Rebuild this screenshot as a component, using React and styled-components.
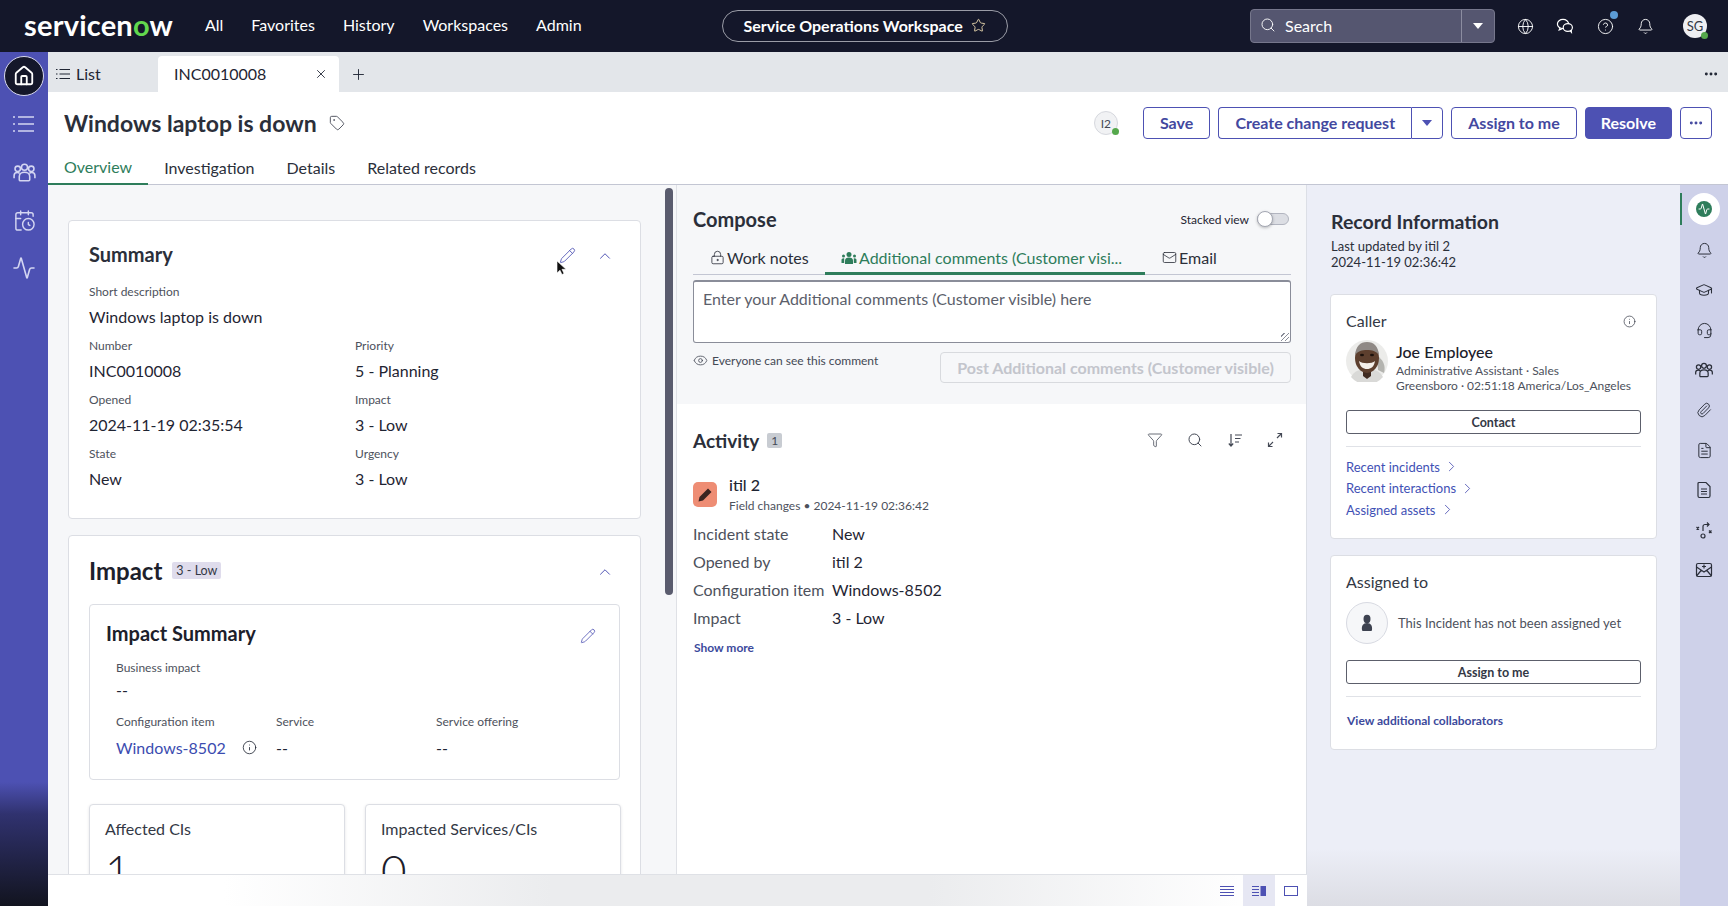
import React from "react";
import styled, { createGlobalStyle } from "styled-components";
import {
  Activity,
  Bell,
  CalendarClock,
  ChevronRight,
  ChevronUp,
  CircleHelp,
  Eye,
  FileText,
  Funnel,
  Globe,
  GraduationCap,
  Headset,
  House,
  Info,
  LockKeyhole,
  Mail,
  Ellipsis,
  Paperclip,
  Pencil,
  Plus,
  Search,
  Star,
  Tag,
  X,
} from "lucide-react";

const GlobalStyle = createGlobalStyle`
  html, body { margin: 0; padding: 0; height: 100%; overflow: hidden; }
  body { font-family: Lato, "Liberation Sans", sans-serif; color: #1f2533; background: #fff; }
  * { box-sizing: border-box; }
`;

const Page = styled.div`
  width: 1728px;
  height: 906px;
  display: flex;
  flex-direction: column;
  overflow: hidden;
`;

/* top bar */
const TopBar = styled.header`
  height: 52px;
  flex: none;
  background: #14172a;
  color: #fff;
  display: flex;
  align-items: center;
  padding: 0 21px 0 24px;
`;
const Logo = styled.div`
  font-size: 29px;
  font-weight: 700;
  letter-spacing: 0.2px;
  line-height: 1;
  width: 181px;
  margin-top: -3px;
  span {
    color: #62d84e;
  }
`;
const TopNav = styled.nav`
  display: flex;
  gap: 28px;
  font-size: 16px;
  margin-top: -3px;
`;
const Pill = styled.div`
  margin-left: 140px;
  width: 286px;
  height: 32px;
  padding-bottom: 2px;
  border: 1px solid #9a9ca6;
  border-radius: 16px;
  display: flex;
  align-items: center;
  justify-content: center;
  gap: 8px;
  font-size: 16px;
  font-weight: 700;
  svg {
    color: #f1dfb4;
  }
`;
const SearchBox = styled.div`
  margin-left: auto;
  width: 245px;
  height: 34px;
  background: #555670;
  border: 1px solid #76778c;
  border-radius: 4px;
  display: flex;
  align-items: center;
  font-size: 16px;
`;
const SearchField = styled.div`
  flex: 1;
  height: 100%;
  padding: 0 0 2px 9px;
  display: flex;
  align-items: center;
  gap: 9px;
  border-right: 1px solid #8b8ca0;
`;
const SearchDrop = styled.div`
  width: 32px;
  display: flex;
  justify-content: center;
`;
const Caret = styled.i`
  display: block;
  width: 0;
  height: 0;
  border-left: 5.5px solid transparent;
  border-right: 5.5px solid transparent;
  border-top: 6px solid ${(p) => p.$color || "#fff"};
`;
const TopIcons = styled.div`
  display: flex;
  align-items: center;
  gap: 20px;
  margin-left: 20px;
`;
const TopIcon = styled.div`
  width: 20px;
  height: 20px;
  position: relative;
  display: flex;
  align-items: center;
  justify-content: center;
`;
const HelpDot = styled.i`
  position: absolute;
  top: -5px;
  right: -3px;
  width: 8px;
  height: 8px;
  border-radius: 50%;
  background: #5b9bd5;
`;
const UserChip = styled.div`
  width: 24px;
  height: 24px;
  margin-left: 8px;
  border-radius: 50%;
  background: #eeeff2;
  color: #333845;
  font-size: 13px;
  display: flex;
  align-items: center;
  justify-content: center;
  position: relative;
`;
const OnlineDot = styled.i`
  position: absolute;
  right: ${(p) => p.$right ?? -1}px;
  bottom: ${(p) => p.$bottom ?? -1}px;
  width: 7px;
  height: 7px;
  border-radius: 50%;
  background: #55a84c;
`;

/* shell */
const Shell = styled.div`
  flex: 1;
  display: flex;
  min-height: 0;
`;
const Rail = styled.aside`
  width: 48px;
  flex: none;
  background: linear-gradient(to bottom, #4d51b3 0, #4d51b3 730px, #30326f 762px, #12141f 854px);
  color: #d4d6f2;
  display: flex;
  flex-direction: column;
  align-items: center;
  padding-top: 4px;
`;
const HomeButton = styled.div`
  width: 40px;
  height: 40px;
  border-radius: 50%;
  background: #14172a;
  border: 1px solid #d8d9ee;
  color: #fff;
  display: flex;
  align-items: center;
  justify-content: center;
  margin-bottom: 4px;
`;
const RailItem = styled.div`
  height: 48px;
  width: 100%;
  display: flex;
  align-items: center;
  justify-content: center;
`;
const Content = styled.div`
  flex: 1;
  min-width: 0;
  display: flex;
  flex-direction: column;
`;

/* tabs */
const TabBar = styled.div`
  height: 40px;
  flex: none;
  background: #e3e6ea;
  display: flex;
  align-items: flex-end;
  font-size: 16px;
`;
const ListTab = styled.div`
  width: 110px;
  height: 36px;
  padding: 0 0 1px 8px;
  display: flex;
  align-items: center;
  gap: 6px;
`;
const RecordTab = styled.div`
  width: 181px;
  height: 36px;
  background: #fff;
  border-radius: 4px 4px 0 0;
  padding: 0 11px 1px 16px;
  display: flex;
  align-items: center;
  justify-content: space-between;
`;
const AddTab = styled.div`
  height: 36px;
  margin-left: 11px;
  display: flex;
  align-items: center;
`;
const TabBarMore = styled.div`
  height: 36px;
  margin-left: auto;
  padding-right: 9px;
  display: flex;
  align-items: center;
`;

/* title */
const TitleRow = styled.div`
  height: 56px;
  flex: none;
  display: flex;
  align-items: center;
  padding: 7px 16px 1px;
  background: #fff;
`;
const Title = styled.h1`
  margin: 0;
  font-size: 23px;
  font-weight: 700;
  color: #2b2f3a;
`;
const TagWrap = styled.div`
  margin-left: 12px;
  display: flex;
  color: #4a4e5a;
`;
const Actions = styled.div`
  margin-left: auto;
  display: flex;
  align-items: center;
  gap: 8px;
`;
const Presence = styled.div`
  width: 24px;
  height: 24px;
  border-radius: 50%;
  background: #f1f2f4;
  border: 1px solid #d6d8de;
  font-size: 12px;
  color: #444955;
  display: flex;
  align-items: center;
  justify-content: center;
  position: relative;
  margin-right: 17px;
`;
const Button = styled.button`
  height: 32px;
  padding: 0 ${(p) => (p.$primary ? 15 : 16)}px 2px;
  font-family: inherit;
  font-size: 16px;
  font-weight: 700;
  color: ${(p) => (p.$primary ? "#fff" : "#43489f")};
  background: ${(p) => (p.$primary ? "#4d51b3" : "#fff")};
  border: 1px solid #4d51b3;
  border-radius: 4px;
  display: flex;
  align-items: center;
  justify-content: center;
`;
const SquareButton = styled(Button)`
  width: 32px;
  padding: 0;
`;
const SplitButton = styled.div`
  display: flex;
  ${Button}:first-child {
    width: 193px;
    padding: 0 0 2px;
    border-radius: 4px 0 0 4px;
    border-right: 0;
  }
  ${Button}:last-child {
    width: 32px;
    padding: 0;
    border-radius: 0 4px 4px 0;
  }
`;
const SubTabs = styled.div`
  height: 37px;
  flex: none;
  display: flex;
  border-bottom: 1px solid #c3c6d3;
  background: #fff;
`;
const SubTab = styled.div`
  height: 37px;
  padding: 2px 16px 0;
  display: flex;
  align-items: center;
  font-size: 16px;
  color: ${(p) => (p.$active ? "#2e7d5b" : "#2b2f3a")};
  border-bottom: ${(p) => (p.$active ? "2px solid #2e7d5b" : "0")};
`;

/* columns */
const Columns = styled.div`
  flex: 1;
  min-height: 0;
  display: flex;
`;
const Workspace = styled.div`
  width: 1259px;
  flex: none;
  display: flex;
  flex-direction: column;
`;
const Panes = styled.div`
  flex: 1;
  min-height: 0;
  display: flex;
`;
const LeftColumn = styled.section`
  width: 629px;
  flex: none;
  position: relative;
  overflow: hidden;
  background: #f6f7f9;
  border-right: 1px solid #dfe1e6;
  padding: 35px 35px 0 20px;
  display: flex;
  flex-direction: column;
  gap: 16px;
`;
const ScrollThumb = styled.i`
  position: absolute;
  top: 3px;
  left: 617px;
  width: 8px;
  height: 407px;
  border-radius: 4px;
  background: #5a5c6e;
`;
const Card = styled.div`
  background: #fff;
  border: 1px solid #dcdee4;
  border-radius: 4px;
  flex: none;
`;
const SummaryCard = styled(Card)`
  height: 299px;
  padding: 19px 20px 0;
`;
const ImpactCard = styled(Card)`
  padding: 18px 20px;
`;
const CardHead = styled.div`
  display: flex;
  align-items: center;
  justify-content: space-between;
  height: 28px;
`;
const CardTitle = styled.h2`
  margin: 0;
  font-size: ${(p) => p.$size || 20}px;
  font-weight: 700;
  color: #2b2f3a;
`;
const HeadIcons = styled.div`
  position: relative;
  display: flex;
  align-items: center;
  gap: 20px;
  margin: 3px 6px 0 0;
  color: #4d51b3;
`;
const Cursor = styled.svg`
  position: absolute;
  left: -3px;
  top: 13px;
`;
const FieldGrid = styled.div`
  display: grid;
  grid-template-columns: ${(p) => p.$cols || "266px 1fr"};
  row-gap: 4px;
  margin-top: ${(p) => p.$top ?? 0}px;
`;
const Field = styled.div`
  grid-column: ${(p) => (p.$wide ? "1 / -1" : "auto")};
  min-height: 50px;
`;
const Label = styled.div`
  font-size: 12px;
  line-height: 18px;
  color: #4d515c;
`;
const Value = styled.div`
  margin-top: ${(p) => p.$gap ?? 1}px;
  font-size: 16px;
  line-height: 29px;
  color: #1f2533;
  display: flex;
  align-items: center;
  gap: 16px;
`;
const ImpactHead = styled.div`
  display: flex;
  align-items: center;
  justify-content: space-between;
  height: 32px;
`;
const ImpactTitle = styled.div`
  display: flex;
  align-items: center;
  gap: 10px;
`;
const BigTitle = styled.h2`
  margin: 0;
  font-size: 24px;
  font-weight: 700;
  color: #1c202b;
`;
const Badge = styled.span`
  background: #dfdcec;
  font-size: 12.5px;
  line-height: 17px;
  padding: 0 4px;
  border-radius: 2px;
  color: #333845;
`;
const InnerCard = styled(Card)`
  margin-top: 18px;
  height: 176px;
  padding: 14px 16px 0;
`;
const InnerHead = styled.div`
  display: flex;
  align-items: center;
  justify-content: space-between;
  padding-right: 7px;
  height: 28px;
  svg {
    margin-top: 6px;
  }
`;
const InnerTitle = styled.h3`
  margin: 0;
  font-size: 20px;
  font-weight: 700;
  color: #1c202b;
`;
const InnerFields = styled.div`
  padding: 12px 0 0 10px;
`;
const LinkValue = styled.span`
  color: #3b4cb0;
`;
const StatGrid = styled.div`
  margin-top: 24px;
  display: grid;
  grid-template-columns: 256px 256px;
  gap: 20px;
`;
const StatCard = styled(Card)`
  height: 90px;
  padding: 14px 15px;
  box-shadow: 0 1px 3px rgba(30, 35, 60, 0.12);
`;
const StatTitle = styled.div`
  font-size: 16px;
  color: #333845;
`;
const StatValue = styled.div`
  font-size: 44px;
  font-weight: 300;
  line-height: 1;
  margin-top: 10px;
  color: #1c202b;
`;

/* middle */
const MiddleColumn = styled.section`
  width: 630px;
  flex: none;
  display: flex;
  flex-direction: column;
  border-right: 1px solid #dcdfe6;
  background: #fff;
`;
const Compose = styled.div`
  height: 219px;
  flex: none;
  background: #f6f7f9;
  padding: 20px 15px 0 16px;
`;
const ComposeHead = styled.div`
  display: flex;
  align-items: center;
  justify-content: space-between;
  height: 28px;
`;
const StackedView = styled.div`
  display: flex;
  align-items: center;
  gap: 8px;
  font-size: 12px;
  margin-right: 2px;
`;
const Toggle = styled.i`
  display: block;
  width: 32px;
  height: 12px;
  border-radius: 6px;
  background: #dcdee4;
  border: 1px solid #b2b5c0;
  position: relative;
`;
const Knob = styled.b`
  position: absolute;
  left: -1px;
  top: -3px;
  width: 16px;
  height: 16px;
  border-radius: 50%;
  background: #fff;
  border: 1px solid #a4a7b3;
  box-shadow: 0 1px 3px rgba(0, 0, 0, 0.25);
`;
const ComposeTabs = styled.div`
  margin-top: 8px;
  height: 34px;
  display: flex;
  border-bottom: 1px solid #c3c6d3;
`;
const ComposeTab = styled.div`
  height: 34px;
  padding-top: 2px;
  padding-bottom: ${(p) => (p.$active ? 0 : 3)}px;
  width: ${(p) => p.$w}px;
  padding-left: ${(p) => p.$pad}px;
  display: flex;
  align-items: center;
  gap: 2px;
  font-size: 16px;
  white-space: nowrap;
  color: ${(p) => (p.$active ? "#2e7d5b" : "#2b2f3a")};
  border-bottom: ${(p) => (p.$active ? "3px solid #2e7d5b" : "0")};
`;
const TextArea = styled.div`
  position: relative;
  margin-top: 5px;
  height: 63px;
  background: #fff;
  border: 1px solid #8a8d99;
  border-top-width: 2px;
  border-radius: 3px;
  padding: 6px 9px;
  font-size: 16px;
  line-height: 22px;
  color: #5c5f6b;
`;
const Grip = styled.i`
  position: absolute;
  right: 1px;
  bottom: 1px;
  width: 8px;
  height: 8px;
  background: repeating-linear-gradient(135deg, transparent 0 2px, #8a8d99 2px 3px);
`;
const ComposeFoot = styled.div`
  display: flex;
  justify-content: space-between;
  margin-top: 9px;
`;
const Hint = styled.div`
  display: flex;
  align-items: center;
  gap: 4px;
  height: 16px;
  font-size: 12px;
  color: #444955;
`;
const PostButton = styled.div`
  width: 351px;
  height: 31px;
  border: 1px solid #d8dade;
  border-radius: 4px;
  display: flex;
  align-items: center;
  justify-content: center;
  font-size: 16px;
  font-weight: 700;
  color: #c3c5cc;
`;
const ActivitySection = styled.div`
  padding: 22px 23px 0 16px;
`;
const ActivityHead = styled.div`
  display: flex;
  align-items: center;
  height: 28px;
`;
const CountBadge = styled.span`
  margin-left: 8px;
  width: 15px;
  height: 15px;
  background: #c8ccd2;
  border-radius: 2px;
  font-size: 12px;
  display: flex;
  align-items: center;
  justify-content: center;
  color: #444955;
`;
const ActivityTools = styled.div`
  margin-left: auto;
  display: flex;
  gap: 24px;
  color: #444955;
`;
const Entry = styled.div`
  display: flex;
  gap: 12px;
  align-items: flex-start;
  margin-top: 20px;
`;
const EntryIcon = styled.div`
  width: 24px;
  height: 25px;
  margin-top: 8px;
  background: #ee8d74;
  border-radius: 5px;
  display: flex;
  align-items: center;
  justify-content: center;
  color: #3b2420;
`;
const EntryName = styled.div`
  font-size: 16px;
  line-height: 22px;
  font-weight: 500;
`;
const EntryMeta = styled.div`
  font-size: 12px;
  line-height: 20px;
  color: #4d515c;
`;
const ChangeRows = styled.div`
  margin-top: 3px;
  display: grid;
  grid-template-columns: 139px 1fr;
  grid-auto-rows: 28px;
  align-items: center;
  font-size: 16px;
`;
const ChangeLabel = styled.div`
  color: #4d515c;
`;
const ShowMore = styled.div`
  margin: 9px 0 0 1px;
  font-size: 12px;
  font-weight: 700;
  color: #3c4a9c;
`;

/* bottom */
const BottomBar = styled.div`
  height: 32px;
  flex: none;
  display: flex;
  justify-content: flex-end;
  align-items: center;
  border-top: 1px solid #dfe1e6;
  background: linear-gradient(to right, #fff 14%, #ebecee 40%, #ebecee 70%, #fff 96%);
`;
const ViewButton = styled.div`
  width: 32px;
  height: 100%;
  display: flex;
  align-items: center;
  justify-content: center;
  color: #4d51b3;
  background: ${(p) => (p.$active ? "#e6e7f3" : "transparent")};
`;

/* right */
const RightColumn = styled.section`
  flex: 1;
  min-width: 0;
  background: linear-gradient(to bottom, #eceef7 92%, #dcdde4 100%);
  padding: 23px 23px 0;
  display: flex;
  flex-direction: column;
`;
const RecordTitle = styled.h2`
  margin: 0 0 0 1px;
  font-size: 19.5px;
  line-height: 28px;
  font-weight: 700;
  color: #2b2f3a;
`;
const RecordMeta = styled.div`
  margin: 2px 0 0 1px;
  font-size: 13px;
  line-height: 16px;
  color: #2b2f3a;
`;
const SideCard = styled(Card)`
  padding: 14px 15px 0;
  height: ${(p) => p.$h}px;
  margin-top: ${(p) => p.$top}px;
`;
const SideHead = styled.div`
  display: flex;
  align-items: center;
  justify-content: space-between;
  font-size: 16px;
  line-height: 24px;
  color: #333845;
  padding-right: 5px;
`;
const Person = styled.div`
  display: flex;
  gap: 8px;
  margin-top: 7px;
  svg {
    flex: none;
  }
`;
const PersonName = styled.div`
  font-size: 16px;
  line-height: 23px;
  font-weight: 500;
  color: #1c202b;
`;
const PersonLine = styled.div`
  font-size: 12px;
  line-height: 15px;
  color: #4d515c;
  white-space: nowrap;
`;
const OutlineButton = styled.div`
  height: ${(p) => p.$h}px;
  margin-top: ${(p) => p.$top}px;
  border: 1px solid #5c5f6b;
  border-radius: 3px;
  display: flex;
  align-items: center;
  justify-content: center;
  font-size: 12.5px;
  font-weight: 700;
  color: #333845;
`;
const Divider = styled.div`
  height: 1px;
  background: #e0e2e7;
  margin-top: 12px;
`;
const LinkList = styled.div`
  margin-top: 9px;
`;
const SideLink = styled.div`
  height: 21.5px;
  display: flex;
  align-items: center;
  gap: 3px;
  font-size: 13px;
  color: #3f51b5;
  svg {
    color: #4d51b3;
  }
`;
const Unassigned = styled.div`
  display: flex;
  align-items: center;
  gap: 10px;
  margin-top: 8px;
  font-size: 13px;
  color: #4d515c;
`;
const EmptyAvatar = styled.div`
  width: 42px;
  height: 42px;
  border-radius: 50%;
  background: #f6f7f9;
  border: 1px solid #d8dae2;
  color: #3d4250;
  display: flex;
  align-items: center;
  justify-content: center;
`;
const BoldLink = styled.div`
  margin: 16px 0 0 1px;
  font-size: 12px;
  font-weight: 700;
  color: #3c4a9c;
`;
const ToolRail = styled.aside`
  width: 48px;
  flex: none;
  background: #ced1e9;
  display: flex;
  flex-direction: column;
  align-items: center;
  padding-top: 8px;
  position: relative;
`;
const ToolActive = styled.div`
  width: 32px;
  height: 32px;
  border-radius: 50%;
  background: #fff;
  display: flex;
  align-items: center;
  justify-content: center;
  margin-bottom: 5px;
`;
const ActiveMark = styled.i`
  position: absolute;
  left: 0;
  top: 8px;
  width: 2px;
  height: 32px;
  background: #2e7d5b;
`;
const GreenDisc = styled.div`
  width: 16px;
  height: 16px;
  border-radius: 50%;
  background: #2e7d5b;
  color: #fff;
  display: flex;
  align-items: center;
  justify-content: center;
`;
const ToolItem = styled.div`
  height: 40px;
  display: flex;
  align-items: center;
  justify-content: center;
  color: #2b2f3a;
`;

const MessagesIcon = () => (
  <svg width="20" height="20" viewBox="0 0 20 20" fill="none" stroke="currentColor" strokeWidth="1.2">
    <ellipse cx="8" cy="8" rx="5.600" ry="4.600" />
    <ellipse cx="12.800" cy="11.500" rx="4.600" ry="3.800" fill="#14172a" />
    <path d="M5 12l-.8 2 2.600-1M15 14.600l1.400 1.600-.2-2.400" />
  </svg>
);

const ListLines = () => (
  <svg width="14" height="12" viewBox="0 0 14 12" stroke="currentColor" strokeWidth="1.100">
    <path d="M0 1.500h1.500M3.500 1.500H14M0 6h1.500M3.500 6H14M0 10.500h1.500M3.500 10.500H14" />
  </svg>
);

const RailList = () => (
  <svg width="24" height="20" viewBox="0 0 24 20" stroke="currentColor" strokeWidth="1.700">
    <path d="M1 3h2M6 3h16M1 10h2M6 10h16M1 17h2M6 17h16" />
  </svg>
);

const GroupIcon = ({ size = 24, weight = 1.4 }) => (
  <svg width={size} height={size} viewBox="0 0 24 24" fill="none" stroke="currentColor" strokeWidth={weight}>
    <circle cx="5.500" cy="8.500" r="2.600" />
    <circle cx="12" cy="7" r="2.900" />
    <circle cx="18.500" cy="8.500" r="2.600" />
    <path d="M2 17.500v-2.500c0-1.700 1.400-3 3-3 1 0 1.800.3 2.400 1M22 17.500v-2.500c0-1.700-1.400-3-3-3-1 0-1.800.3-2.400 1" />
    <path d="M7 19v-3.200c0-2.300 2.200-4 5-4s5 1.700 5 4V19c0 .6-.4 1-1 1H8c-.6 0-1-.4-1-1z" />
  </svg>
);

const GroupSolid = () => (
  <svg width="16" height="14" viewBox="0 0 16 14" fill="currentColor">
    <circle cx="8" cy="3.500" r="2.500" />
    <path d="M4 13V9.500C4 7.500 5.700 6.500 8 6.500s4 1 4 3V13z" />
    <circle cx="2.500" cy="5" r="1.500" />
    <circle cx="13.500" cy="5" r="1.500" />
    <path d="M.5 12V9c0-1 .8-1.800 2-1.800.3 0 .5 0 .7.1V12zM15.500 12V9c0-1-.8-1.800-2-1.800-.3 0-.5 0-.7.1V12z" />
  </svg>
);

const SortIcon = () => (
  <svg width="16" height="16" viewBox="0 0 16 16" fill="none" stroke="currentColor" strokeWidth="1.200">
    <path d="M4 2v12M1.800 11.500L4 14l2.200-2.500M8 3h7M8 6.500h5.500M8 10h4" />
  </svg>
);

const ExpandIcon = () => (
  <svg width="16" height="16" viewBox="0 0 16 16" fill="none" stroke="currentColor" strokeWidth="1.200">
    <path d="M10 6l4.500-4.500M10.500 1.500h4v4M6 10l-4.500 4.500M5.500 14.500h-4v-4" />
  </svg>
);

const RouteIcon = () => (
  <svg width="18" height="18" viewBox="0 0 18 18" fill="none" stroke="currentColor" strokeWidth="1.200">
    <path d="M1.500 6l2.500 2.500M4 6L1.500 8.500M14 9.500l2.500 2.500M16.500 9.500L14 12" />
    <circle cx="8" cy="15" r="2" />
    <path d="M8 10V5.500a2 2 0 0 1 2-2h4M12 1.500l2 2-2 2" />
  </svg>
);

const MailPlusIcon = () => (
  <svg width="18" height="18" viewBox="0 0 18 18" fill="none" stroke="currentColor" strokeWidth="1.200">
    <rect x="1.500" y="2.500" width="15" height="13" rx="1.500" />
    <path d="M1.500 6l7.500 5 7.500-5M1.500 15l5-6M16.500 15l-5-6M9 3.500v4M7 5.500h4" />
  </svg>
);

const DocLines = () => (
  <svg width="18" height="18" viewBox="0 0 18 18" fill="none" stroke="currentColor" strokeWidth="1.200">
    <path d="M4 1.500h7l4 4V15a1.500 1.500 0 0 1-1.500 1.500h-9A1.500 1.500 0 0 1 3 15V2.500a1 1 0 0 1 1-1z" />
    <path d="M6 8h6M6 10.500h6M6 13h6" />
  </svg>
);

const Portrait = () => (
  <svg width="42" height="42" viewBox="0 0 42 42">
    <circle cx="21" cy="21" r="21" fill="#ececea" />
    <path d="M5 37c3-6 9-8 16-8s13 2 16 8a21 21 0 0 1-32 0z" fill="#d9d9d7" />
    <path d="M31 16c6 3 9 10 7 17l-6-3z" fill="#b4b4b0" />
    <path d="M17 30h8v6l-4 3-4-3z" fill="#3f2a20" />
    <ellipse cx="21" cy="18" rx="12" ry="15" fill="#5d3f2e" />
    <path d="M9 15C10 6 14 2 21 2s11 4 12 13c-3-4-7-5-12-5s-9 1-12 5z" fill="#8f8985" />
    <path d="M13 21c3 3 13 3 16 0-1 6-4 8-8 8s-7-2-8-8z" fill="#f4efe9" />
    <ellipse cx="16" cy="15" rx="2" ry="1.200" fill="#1c120d" />
    <ellipse cx="26" cy="15" rx="2" ry="1.200" fill="#1c120d" />
  </svg>
);

const PersonGlyph = () => (
  <svg width="16" height="18" viewBox="0 0 16 18" fill="currentColor">
    <ellipse cx="8" cy="5" rx="3.500" ry="4.200" />
    <path d="M3 16c-.6-4 1-7 5-7s5.600 3 5 7a1 1 0 0 1-1 1H4a1 1 0 0 1-1-1z" />
  </svg>
);

const ViewLines = () => (
  <svg width="14" height="12" viewBox="0 0 14 12" stroke="currentColor" strokeWidth="1">
    <path d="M0 1.500h14M0 4.500h14M0 7.500h14M0 10.500h14" />
  </svg>
);

const ViewSplit = () => (
  <svg width="14" height="12" viewBox="0 0 14 12" stroke="currentColor" strokeWidth="1">
    <path d="M0 1.500h7M0 4.500h7M0 7.500h7M0 10.500h7" />
    <rect x="8.500" y="1" width="5.500" height="10" fill="currentColor" stroke="none" />
  </svg>
);

const ViewSingle = () => (
  <svg width="14" height="12" viewBox="0 0 14 12" fill="none" stroke="currentColor" strokeWidth="1">
    <rect x="0.500" y="1.500" width="13" height="9" />
  </svg>
);

const PencilSolid = () => (
  <svg width="16" height="16" viewBox="0 0 16 16" fill="currentColor">
    <path d="M11 1.500l3.500 3.500-8.500 8.500-4.500 1 1-4.500z" />
  </svg>
);

const changes = [
  ["Incident state", "New"],
  ["Opened by", "itil 2"],
  ["Configuration item", "Windows-8502"],
  ["Impact", "3 - Low"],
];

const Panel = () => (
  <RightColumn>
    <RecordTitle>Record Information</RecordTitle>
    <RecordMeta>
      Last updated by itil 2
      <br />
      2024-11-19 02:36:42
    </RecordMeta>
    <SideCard $h={245} $top={24}>
      <SideHead>
        Caller
        <Info size={13} strokeWidth={1.3} />
      </SideHead>
      <Person>
        <Portrait />
        <div>
          <PersonName>Joe Employee</PersonName>
          <PersonLine>Administrative Assistant · Sales</PersonLine>
          <PersonLine>Greensboro · 02:51:18 America/Los_Angeles</PersonLine>
        </div>
      </Person>
      <OutlineButton $h={24} $top={17}>
        Contact
      </OutlineButton>
      <Divider />
      <LinkList>
        <SideLink>
          Recent incidents <ChevronRight size={17} strokeWidth={1.2} />
        </SideLink>
        <SideLink>
          Recent interactions <ChevronRight size={17} strokeWidth={1.2} />
        </SideLink>
        <SideLink>
          Assigned assets <ChevronRight size={17} strokeWidth={1.2} />
        </SideLink>
      </LinkList>
    </SideCard>
    <SideCard $h={195} $top={16}>
      <SideHead>Assigned to</SideHead>
      <Unassigned>
        <EmptyAvatar>
          <PersonGlyph />
        </EmptyAvatar>
        This Incident has not been assigned yet
      </Unassigned>
      <OutlineButton $h={24} $top={16}>
        Assign to me
      </OutlineButton>
      <Divider />
      <BoldLink>View additional collaborators</BoldLink>
    </SideCard>
  </RightColumn>
);

export default function App() {
  return (
    <Page>
      <GlobalStyle />
      <TopBar>
        <Logo>
          servicen<span>o</span>w
        </Logo>
        <TopNav>
          <div>All</div>
          <div>Favorites</div>
          <div>History</div>
          <div>Workspaces</div>
          <div>Admin</div>
        </TopNav>
        <Pill>
          Service Operations Workspace <Star size={15} strokeWidth={1.4} />
        </Pill>
        <SearchBox>
          <SearchField>
            <Search size={16} strokeWidth={1.4} />
            Search
          </SearchField>
          <SearchDrop>
            <Caret />
          </SearchDrop>
        </SearchBox>
        <TopIcons>
          <TopIcon>
            <Globe size={17} strokeWidth={1.3} />
          </TopIcon>
          <TopIcon>
            <MessagesIcon />
          </TopIcon>
          <TopIcon>
            <CircleHelp size={17} strokeWidth={1.3} />
            <HelpDot />
          </TopIcon>
          <TopIcon>
            <Bell size={17} strokeWidth={1.3} />
          </TopIcon>
          <UserChip>
            SG
            <OnlineDot />
          </UserChip>
        </TopIcons>
      </TopBar>
      <Shell>
        <Rail>
          <HomeButton>
            <House size={22} strokeWidth={2} />
          </HomeButton>
          <RailItem>
            <RailList />
          </RailItem>
          <RailItem>
            <GroupIcon size={25} weight={1.5} />
          </RailItem>
          <RailItem>
            <CalendarClock size={23} strokeWidth={1.5} />
          </RailItem>
          <RailItem>
            <Activity size={24} strokeWidth={1.6} />
          </RailItem>
        </Rail>
        <Content>
          <TabBar>
            <ListTab>
              <ListLines />
              List
            </ListTab>
            <RecordTab>
              INC0010008
              <X size={14} strokeWidth={1.5} />
            </RecordTab>
            <AddTab>
              <Plus size={17} strokeWidth={1.3} />
            </AddTab>
            <TabBarMore>
              <Ellipsis size={16} strokeWidth={2.4} />
            </TabBarMore>
          </TabBar>
          <TitleRow>
            <Title>Windows laptop is down</Title>
            <TagWrap>
              <Tag size={16} strokeWidth={1.4} />
            </TagWrap>
            <Actions>
              <Presence>
                I2
                <OnlineDot $right={-2} $bottom={-1} />
              </Presence>
              <Button>Save</Button>
              <SplitButton>
                <Button>Create change request</Button>
                <Button>
                  <Caret $color="#4d51b3" />
                </Button>
              </SplitButton>
              <Button>Assign to me</Button>
              <Button $primary>Resolve</Button>
              <SquareButton>
                <Ellipsis size={16} strokeWidth={2.4} />
              </SquareButton>
            </Actions>
          </TitleRow>
          <SubTabs>
            <SubTab $active>Overview</SubTab>
            <SubTab>Investigation</SubTab>
            <SubTab>Details</SubTab>
            <SubTab>Related records</SubTab>
          </SubTabs>
          <Columns>
            <Workspace>
              <Panes>
                <LeftColumn>
                  <ScrollThumb />
                  <SummaryCard>
                    <CardHead>
                      <CardTitle>Summary</CardTitle>
                      <HeadIcons>
                        <Pencil size={17} strokeWidth={1.2} />
                        <ChevronUp size={18} strokeWidth={1.3} />
                        <Cursor width="11" height="16" viewBox="0 0 11 16">
                          <path d="M1 1v12l3-2.800 2 4.300 2-1-2-4.200h4z" fill="#111" stroke="#fff" strokeWidth="0.600" />
                        </Cursor>
                      </HeadIcons>
                    </CardHead>
                    <FieldGrid $top={15}>
                      <Field $wide>
                        <Label>Short description</Label>
                        <Value>Windows laptop is down</Value>
                      </Field>
                      <Field>
                        <Label>Number</Label>
                        <Value>INC0010008</Value>
                      </Field>
                      <Field>
                        <Label>Priority</Label>
                        <Value>5 - Planning</Value>
                      </Field>
                      <Field>
                        <Label>Opened</Label>
                        <Value>2024-11-19 02:35:54</Value>
                      </Field>
                      <Field>
                        <Label>Impact</Label>
                        <Value>3 - Low</Value>
                      </Field>
                      <Field>
                        <Label>State</Label>
                        <Value>New</Value>
                      </Field>
                      <Field>
                        <Label>Urgency</Label>
                        <Value>3 - Low</Value>
                      </Field>
                    </FieldGrid>
                  </SummaryCard>
                  <ImpactCard>
                    <ImpactHead>
                      <ImpactTitle>
                        <BigTitle>Impact</BigTitle>
                        <Badge>3 - Low</Badge>
                      </ImpactTitle>
                      <HeadIcons>
                        <ChevronUp size={18} strokeWidth={1.3} />
                      </HeadIcons>
                    </ImpactHead>
                    <InnerCard>
                      <InnerHead>
                        <InnerTitle>Impact Summary</InnerTitle>
                        <Pencil size={16} strokeWidth={1.2} color="#4d51b3" />
                      </InnerHead>
                      <InnerFields>
                        <FieldGrid $cols="160px 160px 1fr">
                          <Field $wide>
                            <Label>Business impact</Label>
                            <Value $gap={-2}>--</Value>
                          </Field>
                          <Field>
                            <Label>Configuration item</Label>
                            <Value $gap={2}>
                              <LinkValue>Windows-8502</LinkValue>
                              <Info size={15} strokeWidth={1.3} />
                            </Value>
                          </Field>
                          <Field>
                            <Label>Service</Label>
                            <Value $gap={2}>--</Value>
                          </Field>
                          <Field>
                            <Label>Service offering</Label>
                            <Value $gap={2}>--</Value>
                          </Field>
                        </FieldGrid>
                      </InnerFields>
                    </InnerCard>
                    <StatGrid>
                      <StatCard>
                        <StatTitle>Affected CIs</StatTitle>
                        <StatValue>1</StatValue>
                      </StatCard>
                      <StatCard>
                        <StatTitle>Impacted Services/CIs</StatTitle>
                        <StatValue>0</StatValue>
                      </StatCard>
                    </StatGrid>
                  </ImpactCard>
                </LeftColumn>
                <MiddleColumn>
                  <Compose>
                    <ComposeHead>
                      <CardTitle>Compose</CardTitle>
                      <StackedView>
                        Stacked view
                        <Toggle>
                          <Knob />
                        </Toggle>
                      </StackedView>
                    </ComposeHead>
                    <ComposeTabs>
                      <ComposeTab $w={132} $pad={17}>
                        <LockKeyhole size={15} strokeWidth={1.3} />
                        Work notes
                      </ComposeTab>
                      <ComposeTab $active $w={320} $pad={16}>
                        <GroupSolid />
                        Additional comments (Customer visi...
                      </ComposeTab>
                      <ComposeTab $w={100} $pad={17}>
                        <Mail size={15} strokeWidth={1.3} />
                        Email
                      </ComposeTab>
                    </ComposeTabs>
                    <TextArea>
                      Enter your Additional comments (Customer visible) here
                      <Grip />
                    </TextArea>
                    <ComposeFoot>
                      <Hint>
                        <Eye size={15} strokeWidth={1.3} />
                        Everyone can see this comment
                      </Hint>
                      <PostButton>Post Additional comments (Customer visible)</PostButton>
                    </ComposeFoot>
                  </Compose>
                  <ActivitySection>
                    <ActivityHead>
                      <CardTitle $size={19}>Activity</CardTitle>
                      <CountBadge>1</CountBadge>
                      <ActivityTools>
                        <Funnel size={16} strokeWidth={1.2} />
                        <Search size={16} strokeWidth={1.5} />
                        <SortIcon />
                        <ExpandIcon />
                      </ActivityTools>
                    </ActivityHead>
                    <Entry>
                      <EntryIcon>
                        <PencilSolid />
                      </EntryIcon>
                      <div>
                        <EntryName>itil 2</EntryName>
                        <EntryMeta>Field changes • 2024-11-19 02:36:42</EntryMeta>
                      </div>
                    </Entry>
                    <ChangeRows>
                      {changes.map(([label, value]) => (
                        <React.Fragment key={label}>
                          <ChangeLabel>{label}</ChangeLabel>
                          <div>{value}</div>
                        </React.Fragment>
                      ))}
                    </ChangeRows>
                    <ShowMore>Show more</ShowMore>
                  </ActivitySection>
                </MiddleColumn>
              </Panes>
              <BottomBar>
                <ViewButton>
                  <ViewLines />
                </ViewButton>
                <ViewButton $active>
                  <ViewSplit />
                </ViewButton>
                <ViewButton>
                  <ViewSingle />
                </ViewButton>
              </BottomBar>
            </Workspace>
            <Panel />
            <ToolRail>
              <ActiveMark />
              <ToolActive>
                <GreenDisc>
                  <Activity size={12} strokeWidth={2} />
                </GreenDisc>
              </ToolActive>
              <ToolItem>
                <Bell size={17} strokeWidth={1.4} />
              </ToolItem>
              <ToolItem>
                <GraduationCap size={18} strokeWidth={1.4} />
              </ToolItem>
              <ToolItem>
                <Headset size={17} strokeWidth={1.4} />
              </ToolItem>
              <ToolItem>
                <GroupIcon size={20} weight={1.5} />
              </ToolItem>
              <ToolItem>
                <Paperclip size={16} strokeWidth={1.4} />
              </ToolItem>
              <ToolItem>
                <FileText size={17} strokeWidth={1.4} />
              </ToolItem>
              <ToolItem>
                <DocLines />
              </ToolItem>
              <ToolItem>
                <RouteIcon />
              </ToolItem>
              <ToolItem>
                <MailPlusIcon />
              </ToolItem>
            </ToolRail>
          </Columns>
        </Content>
      </Shell>
    </Page>
  );
}
